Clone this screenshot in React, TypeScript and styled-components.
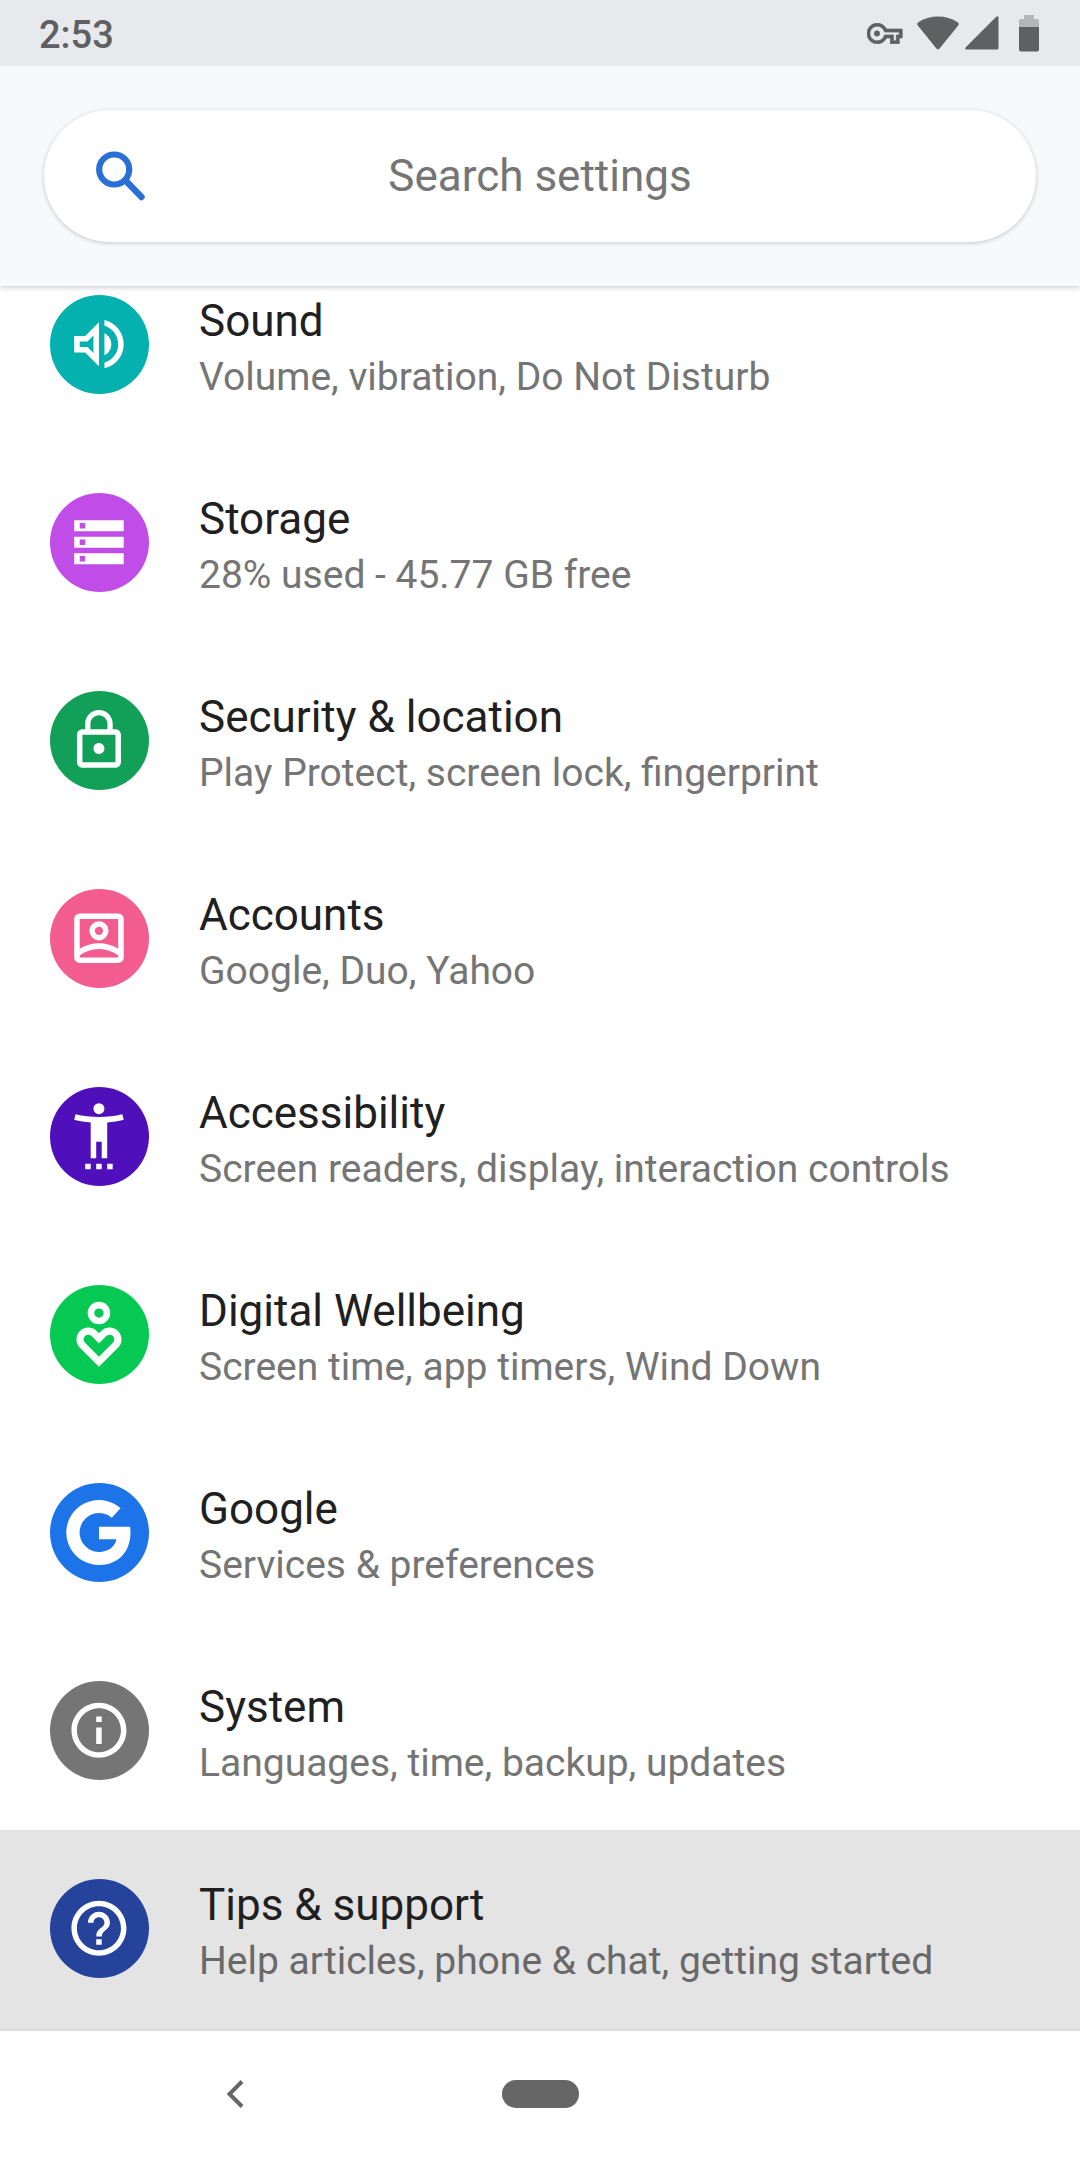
import React from "react";
import styled, { createGlobalStyle } from "styled-components";

const GlobalStyle = createGlobalStyle`
  *, *::before, *::after { box-sizing: border-box; }
  body {
    margin: 0;
    background: #ffffff;
    font-family: Roboto, "Noto Sans", sans-serif;
  }
`;

const Screen = styled.div`
  display: flex;
  flex-direction: column;
  min-height: 100vh;
`;

const TopArea = styled.div`
  position: sticky;
  top: 0;
  z-index: 1;
  background: #f8f9fb;
  box-shadow: 0 1px 6px rgba(60, 64, 67, 0.3);
`;

const StatusBar = styled.div`
  display: flex;
  align-items: center;
  justify-content: space-between;
  height: 66px;
  padding: 0 41px 0 39px;
  background: #e8e9ed;
  color: #5f6062;
`;

const Clock = styled.time`
  padding-top: 3px;
  font-size: 38px;
  line-height: 46px;
  font-weight: 500;
`;

const StatusIcons = styled.div`
  display: flex;
  align-items: center;
  gap: 6px;
`;

const SearchForm = styled.form`
  padding: 44px;
`;

const SearchPill = styled.label`
  display: grid;
  grid-template-columns: 52px 1fr 52px;
  align-items: center;
  height: 132px;
  padding: 0 50px;
  border-radius: 66px;
  background: #ffffff;
  box-shadow: 0 1px 4px rgba(60, 64, 67, 0.28);
`;

const SearchInput = styled.input`
  width: 100%;
  padding: 0;
  border: 0;
  outline: 0;
  background: transparent;
  color: #202124;
  font-family: Roboto, "Noto Sans", sans-serif;
  font-size: 44px;
  line-height: 52px;
  text-align: center;

  &::placeholder {
    color: #757575;
    opacity: 1;
  }
`;

const SettingsList = styled.ul`
  /* the list is scrolled a little way under the search header */
  margin: -40px 0 0;
  padding: 0;
  list-style: none;
`;

const SettingLink = styled.a<{ $pressed?: boolean }>`
  display: flex;
  align-items: flex-start;
  gap: 50px;
  min-height: 198px;
  padding: 49px 50px 0;
  background: ${(p) => (p.$pressed ? "#e4e4e4" : "transparent")};
  text-decoration: none;
`;

const IconDisc = styled.span<{ $color: string }>`
  display: flex;
  flex: none;
  width: 99px;
  height: 99px;
  border-radius: 50%;
  background: ${(p) => p.$color};
  color: #ffffff;
`;

const SettingText = styled.span`
  display: flex;
  flex-direction: column;
  gap: 6px;
  min-width: 0;
`;

const Title = styled.span`
  color: #202020;
  font-size: 44px;
  line-height: 52px;
`;

const Summary = styled.span<{ $pressed?: boolean }>`
  color: ${(p) => (p.$pressed ? "#696969" : "#757575")};
  font-size: 39px;
  line-height: 48px;
`;

const NavBar = styled.nav`
  display: grid;
  grid-template-columns: 1fr 140px 1fr;
  place-items: center;
  height: 132px;
  margin-top: auto;
  background: #ffffff;
  box-shadow: inset 0 3px 0 #dedede;
`;

const NavButton = styled.button`
  display: grid;
  place-items: center;
  width: 100px;
  height: 100px;
  padding: 0;
  border: 0;
  background: transparent;
  color: #666666;
`;

const HomePill = styled.span`
  width: 77px;
  height: 28px;
  border-radius: 14px;
  background: currentColor;
`;

/* 24-unit icons sit in the middle of a 36-unit disc */
const Glyph = ({ children, viewBox = "-5.8 -5.9 36 36" }: { children: React.ReactNode; viewBox?: string }) => (
  <svg width="99" height="99" viewBox={viewBox} fill="currentColor" aria-hidden="true">
    {children}
  </svg>
);

type Setting = {
  title: string;
  summary: string;
  color: string;
  icon: React.ReactNode;
  pressed?: boolean;
};

const settings: Setting[] = [
  {
    title: "Sound",
    summary: "Volume, vibration, Do Not Disturb",
    color: "#05b1ae",
    icon: (
      <Glyph>
        <path d="M3 9v6h4l5 5V4L7 9H3zm7-.17v6.34L7.83 13H5v-2h2.83L10 8.83z" />
        <path d="M16.5 12c0-1.77-1.02-3.29-2.5-4.03v8.05c1.48-.73 2.5-2.25 2.5-4.02z" />
        <path d="M14 3.23v2.06c2.89.86 5 3.54 5 6.71s-2.11 5.85-5 6.71v2.06c4.01-.91 7-4.49 7-8.77s-2.99-7.86-7-8.77z" />
      </Glyph>
    ),
  },
  {
    title: "Storage",
    summary: "28% used - 45.77 GB free",
    color: "#c14de8",
    icon: (
      <Glyph>
        <path
          fillRule="evenodd"
          d="M3 4h18v4H3zM5 5v2h2V5zM3 10h18v4H3zM5 11v2h2v-2zM3 16h18v4H3zM5 17v2h2v-2z"
        />
      </Glyph>
    ),
  },
  {
    title: "Security & location",
    summary: "Play Protect, screen lock, fingerprint",
    color: "#129f58",
    icon: (
      <Glyph>
        <path d="M12 17c1.1 0 2-.9 2-2s-.9-2-2-2-2 .9-2 2 .9 2 2 2zm6-9h-1V6c0-2.76-2.24-5-5-5S7 3.24 7 6v2H6c-1.1 0-2 .9-2 2v10c0 1.1.9 2 2 2h12c1.1 0 2-.9 2-2V10c0-1.1-.9-2-2-2zM8.9 6c0-1.71 1.39-3.1 3.1-3.1s3.1 1.39 3.1 3.1v2H8.9V6zM18 20H6V10h12v10z" />
      </Glyph>
    ),
  },
  {
    title: "Accounts",
    summary: "Google, Duo, Yahoo",
    color: "#f25c8e",
    icon: (
      <Glyph>
        <path
          fillRule="evenodd"
          d="M5 3h14a2 2 0 0 1 2 2v14a2 2 0 0 1-2 2H5a2 2 0 0 1-2-2V5a2 2 0 0 1 2-2zM5 5v10.8Q8.2 13.8 12 13.8T19 15.8V5zM5 19h14v-.7Q16 15.9 12 15.9T5 18.3z"
        />
        <path
          fillRule="evenodd"
          d="M12 5.8a3.5 3.5 0 1 0 0 7 3.5 3.5 0 0 0 0-7zm0 2a1.5 1.5 0 1 1 0 3 1.5 1.5 0 0 1 0-3z"
        />
      </Glyph>
    ),
  },
  {
    title: "Accessibility",
    summary: "Screen readers, display, interaction controls",
    color: "#4f10bc",
    icon: (
      <Glyph>
        <circle cx="12" cy="2" r="2" />
        <path d="M20.5 4c-2.61.7-5.67 1-8.5 1s-5.89-.3-8.5-1L3 6c1.86.5 4 .83 6 1v13h2v-6h2v6h2V7c2-.17 4.14-.5 6-1l-.5-2z" />
        <path d="M7 22h2v2H7zM11 22h2v2h-2zM15 22h2v2h-2z" />
      </Glyph>
    ),
  },
  {
    title: "Digital Wellbeing",
    summary: "Screen time, app timers, Wind Down",
    color: "#06c953",
    icon: (
      <Glyph>
        <g fill="none" stroke="currentColor">
          <circle cx="12" cy="4.3" r="2.9" strokeWidth="2.4" />
          <path
            strokeWidth="2.6"
            d="M12 22 5.93 15.92A3 3 0 0 1 10.17 11.68L12 13.51 13.83 11.68A3 3 0 0 1 18.07 15.92Z"
          />
        </g>
      </Glyph>
    ),
  },
  {
    title: "Google",
    summary: "Services & preferences",
    color: "#1d74e8",
    icon: (
      <Glyph viewBox="0.5 0 99 99">
        <path d="M71 25.3A32.5 32.5 0 1 0 49.5 82C69 82 81 68.5 81 49.5C81 47.3 80.9 45.5 80.5 43.7H49.5V56.3H67C65 64.5 58.5 69 49.5 69A19.5 19.5 0 1 1 62.3 34.7Z" />
      </Glyph>
    ),
  },
  {
    title: "System",
    summary: "Languages, time, backup, updates",
    color: "#757575",
    icon: (
      <Glyph>
        <path d="M11 7h2v2h-2zm0 4h2v6h-2zm1-9C6.48 2 2 6.48 2 12s4.48 10 10 10 10-4.48 10-10S17.52 2 12 2zm0 18c-4.41 0-8-3.59-8-8s3.59-8 8-8 8 3.59 8 8-3.59 8-8 8z" />
      </Glyph>
    ),
  },
  {
    title: "Tips & support",
    summary: "Help articles, phone & chat, getting started",
    color: "#25439b",
    pressed: true,
    icon: (
      <Glyph>
        <path d="M11 18h2v-2h-2v2zm1-16C6.48 2 2 6.48 2 12s4.48 10 10 10 10-4.48 10-10S17.52 2 12 2zm0 18c-4.41 0-8-3.59-8-8s3.59-8 8-8 8 3.59 8 8-3.59 8-8 8zm0-14c-2.21 0-4 1.79-4 4h2c0-1.1.9-2 2-2s2 .9 2 2c0 2-3 1.75-3 5h2c0-2.25 3-2.5 3-5 0-2.21-1.79-4-4-4z" />
      </Glyph>
    ),
  },
];

export default function App() {
  return (
    <Screen>
      <GlobalStyle />
      <TopArea>
        <StatusBar>
          <Clock>2:53</Clock>
          <StatusIcons>
            <svg width="44" height="21" viewBox="0 5 30 14" fill="currentColor" aria-hidden="true">
              <path
                stroke="currentColor"
                strokeWidth=".5"
                d="M22 19h-6v-4h-2.68c-1.14 2.42-3.6 4-6.32 4-3.86 0-7-3.14-7-7s3.14-7 7-7c2.72 0 5.17 1.58 6.32 4H24v6h-2v4zm-4-2h2v-4h2v-2H11.94l-.23-.67C11.01 8.34 9.11 7 7 7c-2.76 0-5 2.24-5 5s2.24 5 5 5c2.11 0 4.01-1.34 4.71-3.33l.23-.67H18v4z"
              />
              <circle cx="6.8" cy="12" r="2" />
            </svg>
            <svg width="42" height="34" viewBox="0 0 42 34" fill="currentColor" aria-hidden="true">
              <path d="M.6 9.2C-.1 8.3 0 7.3 1 6.6C7 2.4 14 .5 21 .5S35 2.4 41 6.6C42 7.3 42.1 8.3 41.4 9.2L22.6 32.5Q21 34.2 19.4 32.5Z" />
            </svg>
            <svg width="34" height="34" viewBox="0 0 34 34" fill="currentColor" aria-hidden="true">
              <path d="M31.2.8Q33.400-.8 33.5 1.6V32Q33.5 33.5 32 33.5H1.6Q-.9 33.4.8 31.3Z" />
            </svg>
            <svg width="34" height="37" viewBox="0 0 34 37" fill="currentColor" aria-hidden="true">
              <path opacity=".38" d="M19 0h10v4h3.5Q34 4 34 5.5V12H14V5.5Q14 4 15.5 4H19z" />
              <path d="M14 12h20v22.5q0 2-2 2H16q-2 0-2-2z" />
            </svg>
          </StatusIcons>
        </StatusBar>
        <SearchForm role="search" onSubmit={(e) => e.preventDefault()}>
          <SearchPill>
            <svg width="52" height="52" viewBox="0 0 52 52" fill="none" stroke="#2a6fd6" aria-hidden="true">
              <circle cx="20.2" cy="19.5" r="15" strokeWidth="6.2" />
              <path d="M33 32 47.500 47" strokeWidth="6.4" strokeLinecap="round" />
            </svg>
            <SearchInput type="text" placeholder="Search settings" aria-label="Search settings" />
          </SearchPill>
        </SearchForm>
      </TopArea>

      <SettingsList>
        {settings.map((s) => (
          <li key={s.title}>
            <SettingLink href="#" $pressed={s.pressed}>
              <IconDisc $color={s.color}>{s.icon}</IconDisc>
              <SettingText>
                <Title>{s.title}</Title>
                <Summary $pressed={s.pressed}>{s.summary}</Summary>
              </SettingText>
            </SettingLink>
          </li>
        ))}
      </SettingsList>

      <NavBar aria-label="System navigation">
        <NavButton type="button" aria-label="Back">
          <svg width="18" height="28" viewBox="0 0 18 28" fill="none" stroke="currentColor" aria-hidden="true">
            <path d="M16 1.5 3.5 14 16 26.5" strokeWidth="4" />
          </svg>
        </NavButton>
        <NavButton type="button" aria-label="Home">
          <HomePill />
        </NavButton>
      </NavBar>
    </Screen>
  );
}
